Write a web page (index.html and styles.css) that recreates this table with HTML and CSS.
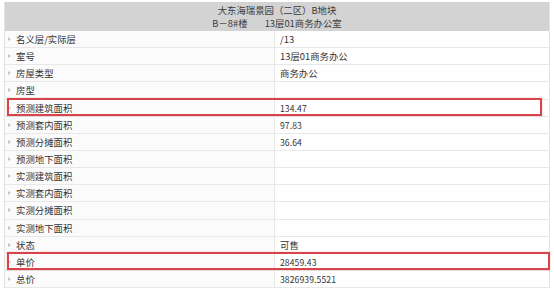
FILE: index.html
```html
<!DOCTYPE html>
<html lang="zh-CN">
<head>
<meta charset="utf-8">
<link rel="stylesheet" href="styles.css">
</head>
<body>
<div class="sheet">
  <div class="head">
    <div class="head-line">大东海瑞景园（二区）B地块</div>
    <div class="head-line"><span class="bld">B－8#楼</span><span>13层01商务办公室</span></div>
  </div>
  <div class="row"><div class="lab"><i class="arr"></i>名义层/实际层</div><div class="val">/13</div></div>
  <div class="row"><div class="lab"><i class="arr"></i>室号</div><div class="val">13层01商务办公</div></div>
  <div class="row"><div class="lab"><i class="arr"></i>房屋类型</div><div class="val">商务办公</div></div>
  <div class="row"><div class="lab"><i class="arr"></i>房型</div><div class="val"></div></div>
  <div class="row hl hl-short"><div class="lab"><i class="arr"></i>预测建筑面积</div><div class="val num">134.47</div></div>
  <div class="row"><div class="lab"><i class="arr"></i>预测套内面积</div><div class="val num">97.83</div></div>
  <div class="row"><div class="lab"><i class="arr"></i>预测分摊面积</div><div class="val num">36.64</div></div>
  <div class="row"><div class="lab"><i class="arr"></i>预测地下面积</div><div class="val"></div></div>
  <div class="row"><div class="lab"><i class="arr"></i>实测建筑面积</div><div class="val"></div></div>
  <div class="row"><div class="lab"><i class="arr"></i>实测套内面积</div><div class="val"></div></div>
  <div class="row"><div class="lab"><i class="arr"></i>实测分摊面积</div><div class="val"></div></div>
  <div class="row"><div class="lab"><i class="arr"></i>实测地下面积</div><div class="val"></div></div>
  <div class="row"><div class="lab"><i class="arr"></i>状态</div><div class="val">可售</div></div>
  <div class="row hl hl-long"><div class="lab"><i class="arr"></i>单价</div><div class="val num">28459.43</div></div>
  <div class="row"><div class="lab"><i class="arr"></i>总价</div><div class="val num">3826939.5521</div></div>
</div>
</body>
</html>
```

FILE: styles.css
```css
html, body {
  margin: 0;
  padding: 0;
  background: #ffffff;
}
body {
  font-family: "Noto Sans CJK SC", "Noto Sans", sans-serif;
  font-size: 9.4px;
  color: #333333;
}
.sheet {
  width: 546px;
  margin: 2px 0 0 4px;
  border-left: 1px solid #e2e2e2;
  border-right: 1px solid #e2e2e2;
  box-sizing: border-box;
}
.head {
  height: 29px;
  background: #d3d3d3;
  display: flex;
  flex-direction: column;
  align-items: center;
  justify-content: center;
  line-height: 13px;
  color: #3a3a3a;
}
.bld {
  margin-right: 17px;
}
.row {
  position: relative;
  display: grid;
  grid-template-columns: 270px 1fr;
  height: 17.15px;
  box-sizing: border-box;
  border-bottom: 1px solid #e8e8e8;
  line-height: 16px;
}
.lab {
  display: flex;
  align-items: center;
  padding-left: 3px;
  background: #fbfbfb;
  border-right: 1px solid #e6e6e6;
}
.arr {
  width: 0;
  height: 0;
  border-left: 3px solid #c4c4c4;
  border-top: 2px solid transparent;
  border-bottom: 2px solid transparent;
  margin-right: 5px;
}
.val {
  padding-left: 5px;
  background: #ffffff;
}
.num {
  font-size: 8.6px;
  letter-spacing: 0.1px;
}
.hl::after {
  content: "";
  position: absolute;
  left: 2px;
  top: -2px;
  height: 18px;
  border: 2px solid #d9434a;
  box-sizing: border-box;
  box-shadow: 0 0 1px rgba(217, 67, 74, 0.5);
}
.hl-short::after {
  width: 535px;
}
.hl-long::after {
  width: 543px;
}
```
